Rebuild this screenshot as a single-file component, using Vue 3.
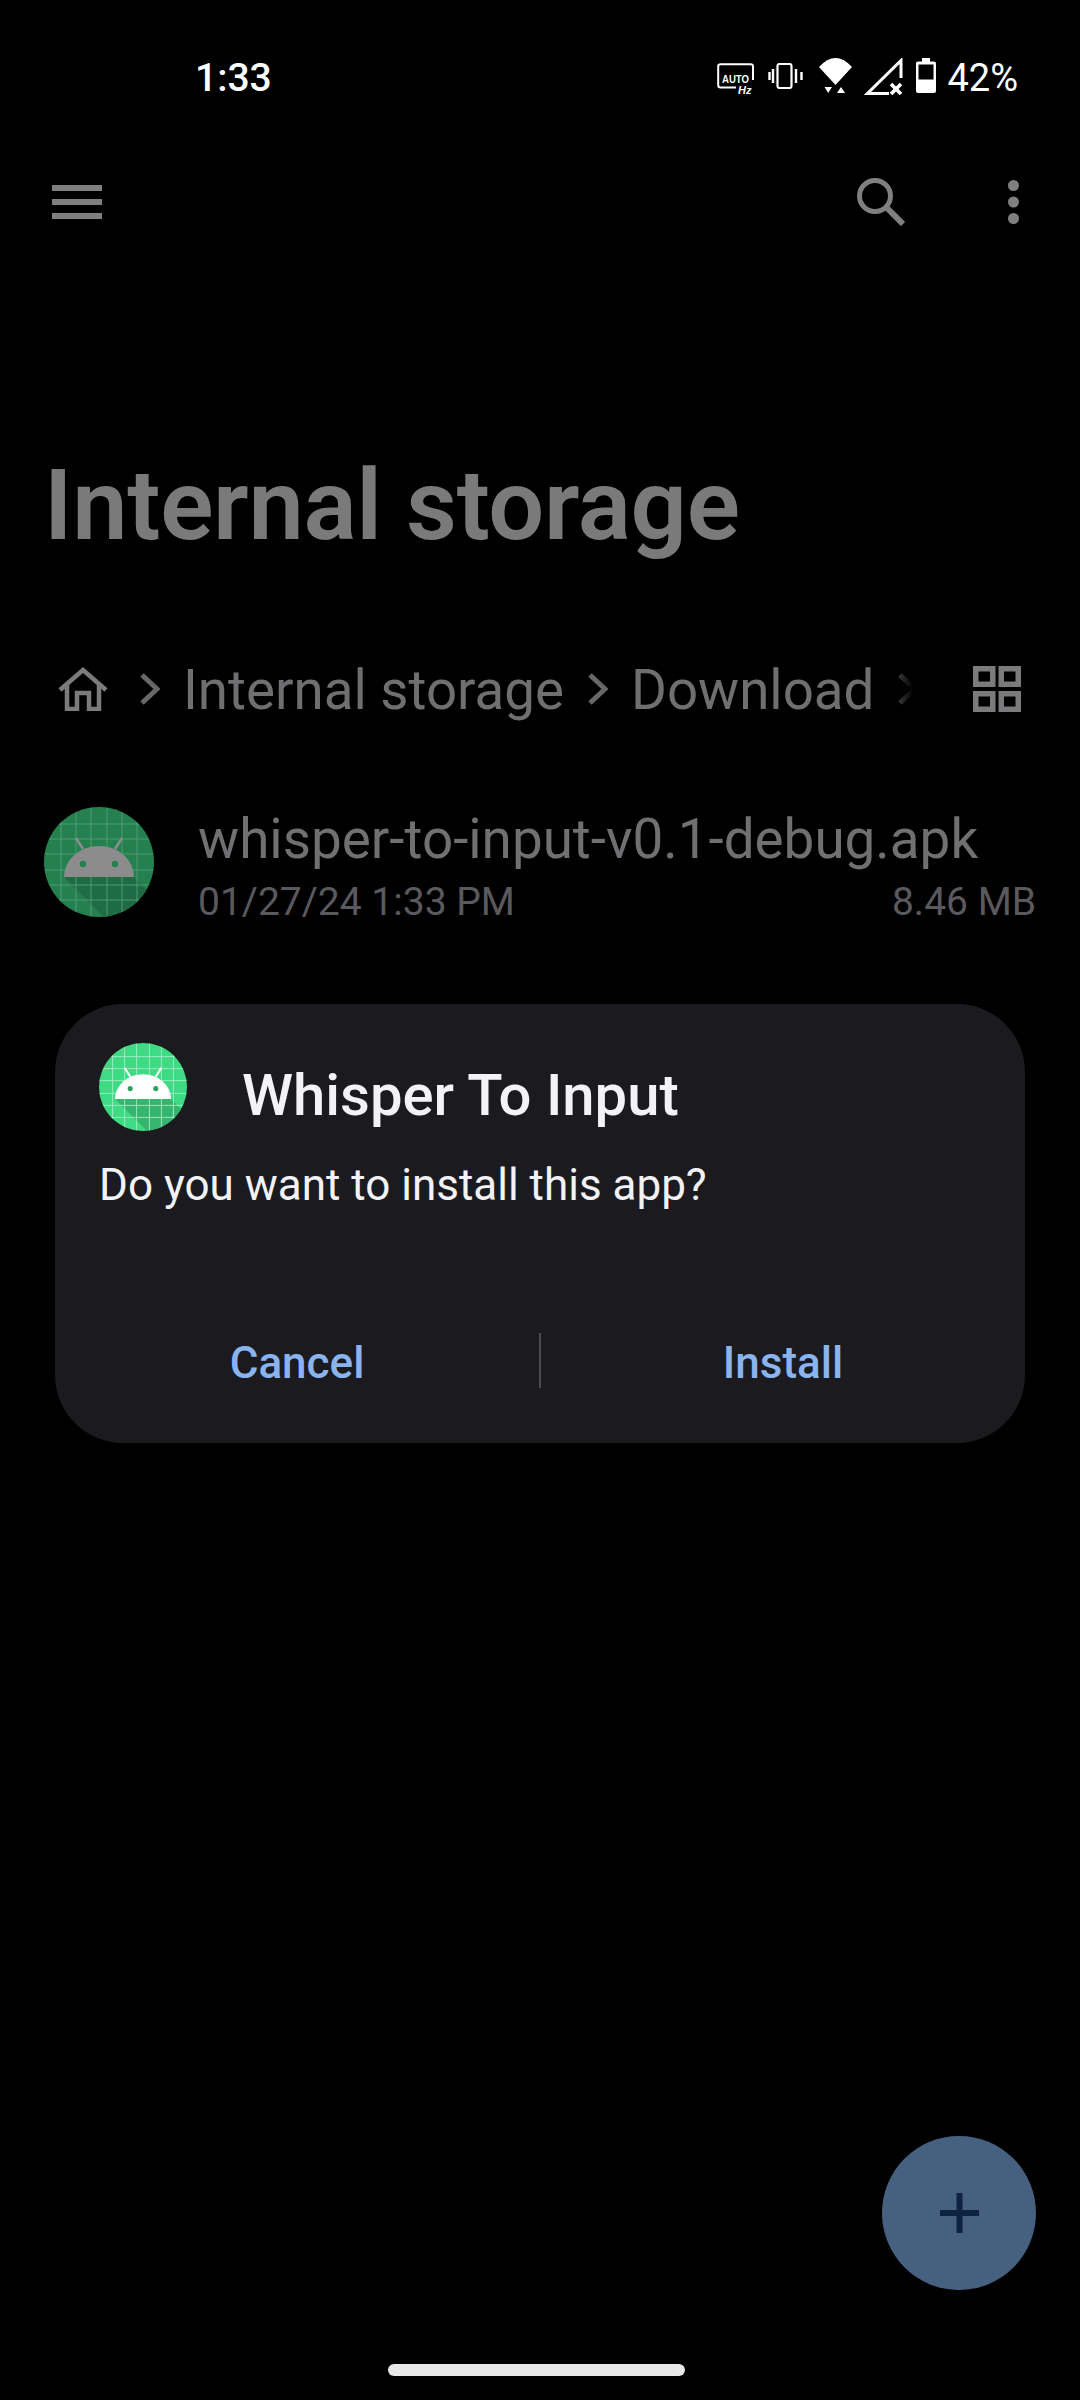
<template>
  <div class="screen">
    <header class="status">
      <span class="clock">1:33</span>
      <div class="status-right">
        <svg class="s-auto" width="38" height="32" viewBox="0 0 38 32">
          <path d="M19 24.500 H3.500 Q1.200 24.500 1.200 22 V3.500 Q1.200 1.200 3.500 1.200 H33.500 Q36 1.200 36 3.500 V17" fill="none" stroke="#fff" stroke-width="2"/>
          <text x="5" y="19.500" textLength="27" lengthAdjust="spacingAndGlyphs" class="auto-t">AUTO</text>
          <text x="21" y="31" class="hz-t">Hz</text>
        </svg>
        <svg class="s-vib" width="36" height="26" viewBox="0 0 36 26" fill="none" stroke="#fff">
          <rect x="9.500" y="1" width="14" height="24" rx="2" stroke-width="2.200"/>
          <path d="M5 6V20M1.500 9V17M28 6V20M33.500 9V17" stroke-width="2.400"/>
        </svg>
        <svg class="s-wifi" width="33" height="35" viewBox="0 0 33 35" fill="#fff">
          <path d="M0 9 Q16.500 -9 33 9 L16.500 27Z"/>
          <path d="M5.500 29H13L9.200 35Z M18 35H26L22 29Z"/>
        </svg>
        <svg class="s-sig" width="40" height="37" viewBox="0 0 40 37" fill="none">
          <path d="M25 35.500 H3.500 L37 2.500 V20" stroke="#fff" stroke-width="3"/>
          <path d="M27 26L37 36M37 26L27 36" stroke="#fff" stroke-width="3.600"/>
        </svg>
        <svg class="s-bat" width="22" height="35" viewBox="0 0 22 35">
          <path d="M7 0H15V3.500H19Q21 3.500 21 5.500V33Q21 35 19 35H3Q1 35 1 33V5.500Q1 3.500 3 3.500H7Z" fill="#fff"/>
          <rect x="3.500" y="6.500" width="15" height="15" fill="#000"/>
        </svg>
        <span class="pct">42%</span>
      </div>
    </header>

    <div class="toolbar">
      <svg width="50" height="34" viewBox="0 0 50 34" fill="#7f7f7f">
        <rect width="50" height="6" y="0"/><rect width="50" height="6" y="14"/><rect width="50" height="6" y="28"/>
      </svg>
      <div class="tool-right">
        <svg width="48" height="48" viewBox="0 0 48 48" fill="none" stroke="#808080">
          <circle cx="18" cy="18" r="15.500" stroke-width="5"/>
          <path d="M30 30L46 46" stroke-width="6"/>
        </svg>
        <svg width="11" height="44" viewBox="0 0 11 44" fill="#808080">
          <circle cx="5.500" cy="5.500" r="5.500"/><circle cx="5.500" cy="22" r="5.500"/><circle cx="5.500" cy="38.500" r="5.500"/>
        </svg>
      </div>
    </div>

    <h1 class="title">Internal storage</h1>

    <nav class="crumbs">
      <svg class="home" width="50" height="44" viewBox="0 0 50 44" fill="none" stroke="#7b7b7d" stroke-width="4.500">
        <path d="M2 23L25 3L48 23"/>
        <path d="M9 18V42H19V26H31V42H41V18"/>
      </svg>
      <svg class="chev" width="20" height="32" viewBox="0 0 20 32" fill="none" stroke="#68686b" stroke-width="5"><path d="M2 2L17 16L2 30"/></svg>
      <span class="crumb">Internal storage</span>
      <svg class="chev" width="20" height="32" viewBox="0 0 20 32" fill="none" stroke="#68686b" stroke-width="5"><path d="M2 2L17 16L2 30"/></svg>
      <span class="crumb">Download</span>
      <svg class="chev fade" width="15" height="32" viewBox="0 0 15 32" fill="none" stroke="url(#fadeG)" stroke-width="5">
        <defs><linearGradient id="fadeG" gradientUnits="userSpaceOnUse" x1="0" y1="0" x2="15" y2="0"><stop offset="0" stop-color="#3c3c3e"/><stop offset="1" stop-color="#000"/></linearGradient></defs>
        <path d="M2 2L17 16L2 30"/>
      </svg>
      <svg class="grid-ic" width="48" height="46" viewBox="0 0 48 46" fill="none" stroke="#7b7b7d" stroke-width="5.500">
        <rect x="2.750" y="2.750" width="17" height="15.500"/><rect x="28.250" y="2.750" width="17" height="15.500"/>
        <rect x="2.750" y="27.750" width="17" height="15.500"/><rect x="28.250" y="27.750" width="17" height="15.500"/>
      </svg>
    </nav>

    <section class="file">
      <svg class="apk" width="110" height="110" viewBox="0 0 110 110">
        <defs><clipPath id="c1"><circle cx="55" cy="55" r="55"/></clipPath></defs>
        <g clip-path="url(#c1)">
          <rect width="110" height="110" fill="#24804f"/>
          <path d="M20 70H90L110 90V110H60Z" fill="#1f6b43"/>
          <path d="M17 0V110M32 0V110M47 0V110M63 0V110M78 0V110M93 0V110M0 17H110M0 32H110M0 47H110M0 63H110M0 78H110M0 93H110" stroke="#4f9a72" stroke-width="1"/>
          <path d="M20 70 A35 31 0 0 1 90 70Z" fill="#8c8c8c"/>
          <path d="M39 42L32 31M71 42L78 31" stroke="#8c8c8c" stroke-width="2.500"/>
          <circle cx="39" cy="57" r="3.200" fill="#24804f"/><circle cx="71" cy="57" r="3.200" fill="#24804f"/>
        </g>
      </svg>
      <div class="file-body">
        <div class="file-name">whisper-to-input-v0.1-debug.apk</div>
        <div class="file-meta"><span>01/27/24 1:33 PM</span><span>8.46 MB</span></div>
      </div>
    </section>

    <section class="dialog">
      <div class="d-head">
        <svg class="d-icon" width="88" height="88" viewBox="0 0 110 110">
          <defs><clipPath id="c2"><circle cx="55" cy="55" r="55"/></clipPath></defs>
          <g clip-path="url(#c2)">
            <rect width="110" height="110" fill="#3ddc84"/>
            <path d="M20 70H90L110 90V110H60Z" fill="#35b56e"/>
            <path d="M17 0V110M32 0V110M47 0V110M63 0V110M78 0V110M93 0V110M0 17H110M0 32H110M0 47H110M0 63H110M0 78H110M0 93H110" stroke="#9debc0" stroke-width="1.200"/>
            <path d="M20 70 A35 31 0 0 1 90 70Z" fill="#fff"/>
            <path d="M39 42L32 31M71 42L78 31" stroke="#fff" stroke-width="2.500"/>
            <circle cx="39" cy="57" r="3.200" fill="#2d9e60"/><circle cx="71" cy="57" r="3.200" fill="#2d9e60"/>
          </g>
        </svg>
        <h2 class="d-title">Whisper To Input</h2>
      </div>
      <p class="d-text">Do you want to install this app?</p>
      <div class="d-actions">
        <span class="d-btn">Cancel</span>
        <i class="d-sep"></i>
        <span class="d-btn">Install</span>
      </div>
    </section>

    <div class="fab">
      <svg width="39" height="40" viewBox="0 0 39 40" fill="#0d2340"><rect x="16.500" width="6" height="40"/><rect y="17" width="39" height="6"/></svg>
    </div>
    <div class="home-bar"></div>
  </div>
</template>

<script setup>
</script>

<style>
html, body { margin: 0; background: #000; }
</style>

<style scoped>
.screen {
  position: relative;
  width: 1080px;
  height: 2400px;
  background: #000;
  overflow: hidden;
  font-family: Roboto, "Liberation Sans", sans-serif;
  display: flex;
  flex-direction: column;
}
.status {
  height: 156px;
  padding: 0 62px 0 195px;
  display: flex;
  align-items: center;
  justify-content: space-between;
  color: #fff;
  flex: none;
  box-sizing: border-box;
}
.clock { font-size: 39px; font-weight: 500; }
.status-right { display: flex; align-items: center; }
.s-auto { margin-top: 2px; margin-right: 13px; }
.s-vib { margin-top: -4px; margin-right: 15px; }
.s-wifi { margin-top: -5px; margin-right: 12px; }
.s-sig { margin-top: -3px; margin-right: 11px; }
.s-bat { margin-top: -5px; margin-right: 10px; }
.pct { font-size: 38px; font-weight: 450; }
.auto-t { font: 700 11.500px "Liberation Sans", sans-serif; fill: #fff; }
.hz-t { font: italic 700 11px "Liberation Sans", sans-serif; fill: #fff; }
.toolbar {
  flex: none;
  margin-top: 7px;
  height: 78px;
  padding: 0 61px 0 52px;
  display: flex;
  align-items: center;
  justify-content: space-between;
}
.tool-right { display: flex; align-items: center; gap: 103px; }
.title {
  margin: 209px 0 0 44px;
  font-size: 99px;
  line-height: 110px;
  font-weight: 600;
  letter-spacing: -0.3px;
  color: #7a7a7a;
  flex: none;
}
.crumbs {
  flex: none;
  margin-top: 94px;
  height: 70px;
  display: flex;
  align-items: center;
  padding: 0 59px 0 58px;
}
.crumb { font-size: 54.700px; color: #6f6f72; white-space: nowrap; padding-top: 2px; }
.home { margin-right: 32px; flex: none; }
.chev { margin-right: 23px; flex: none; }
.crumb + .chev { margin-left: 24px; }
.grid-ic { margin-left: auto; flex: none; }
.file {
  flex: none;
  margin-top: 83px;
  display: flex;
  padding-left: 44px;
}
.apk { flex: none; }
.file-body { margin-left: 44px; width: 838px; padding-top: 1px; }
.file-name { font-size: 54.800px; line-height: 62px; color: #707073; white-space: nowrap; }
.file-meta {
  display: flex;
  justify-content: space-between;
  margin-top: 9px;
  font-size: 39px;
  line-height: 46px;
  color: #5a5a5e;
}
.dialog {
  flex: none;
  margin: 79px 0 0 55px;
  width: 970px;
  height: 439px;
  box-sizing: border-box;
  background: #1b1b1f;
  border-radius: 68px;
  padding: 39px 44px 0;
  display: flex;
  flex-direction: column;
}
.d-head { display: flex; align-items: center; height: 88px; }
.d-icon { flex: none; }
.d-title { margin: 16px 0 0 55px; font-size: 58px; line-height: 68px; font-weight: 500; color: #f3f2f7; }
.d-text { margin: 27px 0 0; font-size: 44px; line-height: 54px; color: #f3f2f7; }
.d-actions {
  margin: 121px -44px 0;
  height: 55px;
  display: flex;
  align-items: center;
}
.d-btn {
  flex: 1;
  text-align: center;
  font-size: 44px;
  font-weight: 500;
  color: #8ab4f0;
  padding-top: 5px;
}
.d-sep { width: 2px; height: 55px; background: #4a4a4f; }
.fab {
  position: absolute;
  left: 882px;
  top: 2136px;
  width: 154px;
  height: 154px;
  border-radius: 50%;
  background: #466080;
  display: flex;
  align-items: center;
  justify-content: center;
}
.home-bar {
  position: absolute;
  left: 388px;
  top: 2364px;
  width: 297px;
  height: 12px;
  border-radius: 6px;
  background: #e8e8e8;
}
</style>
